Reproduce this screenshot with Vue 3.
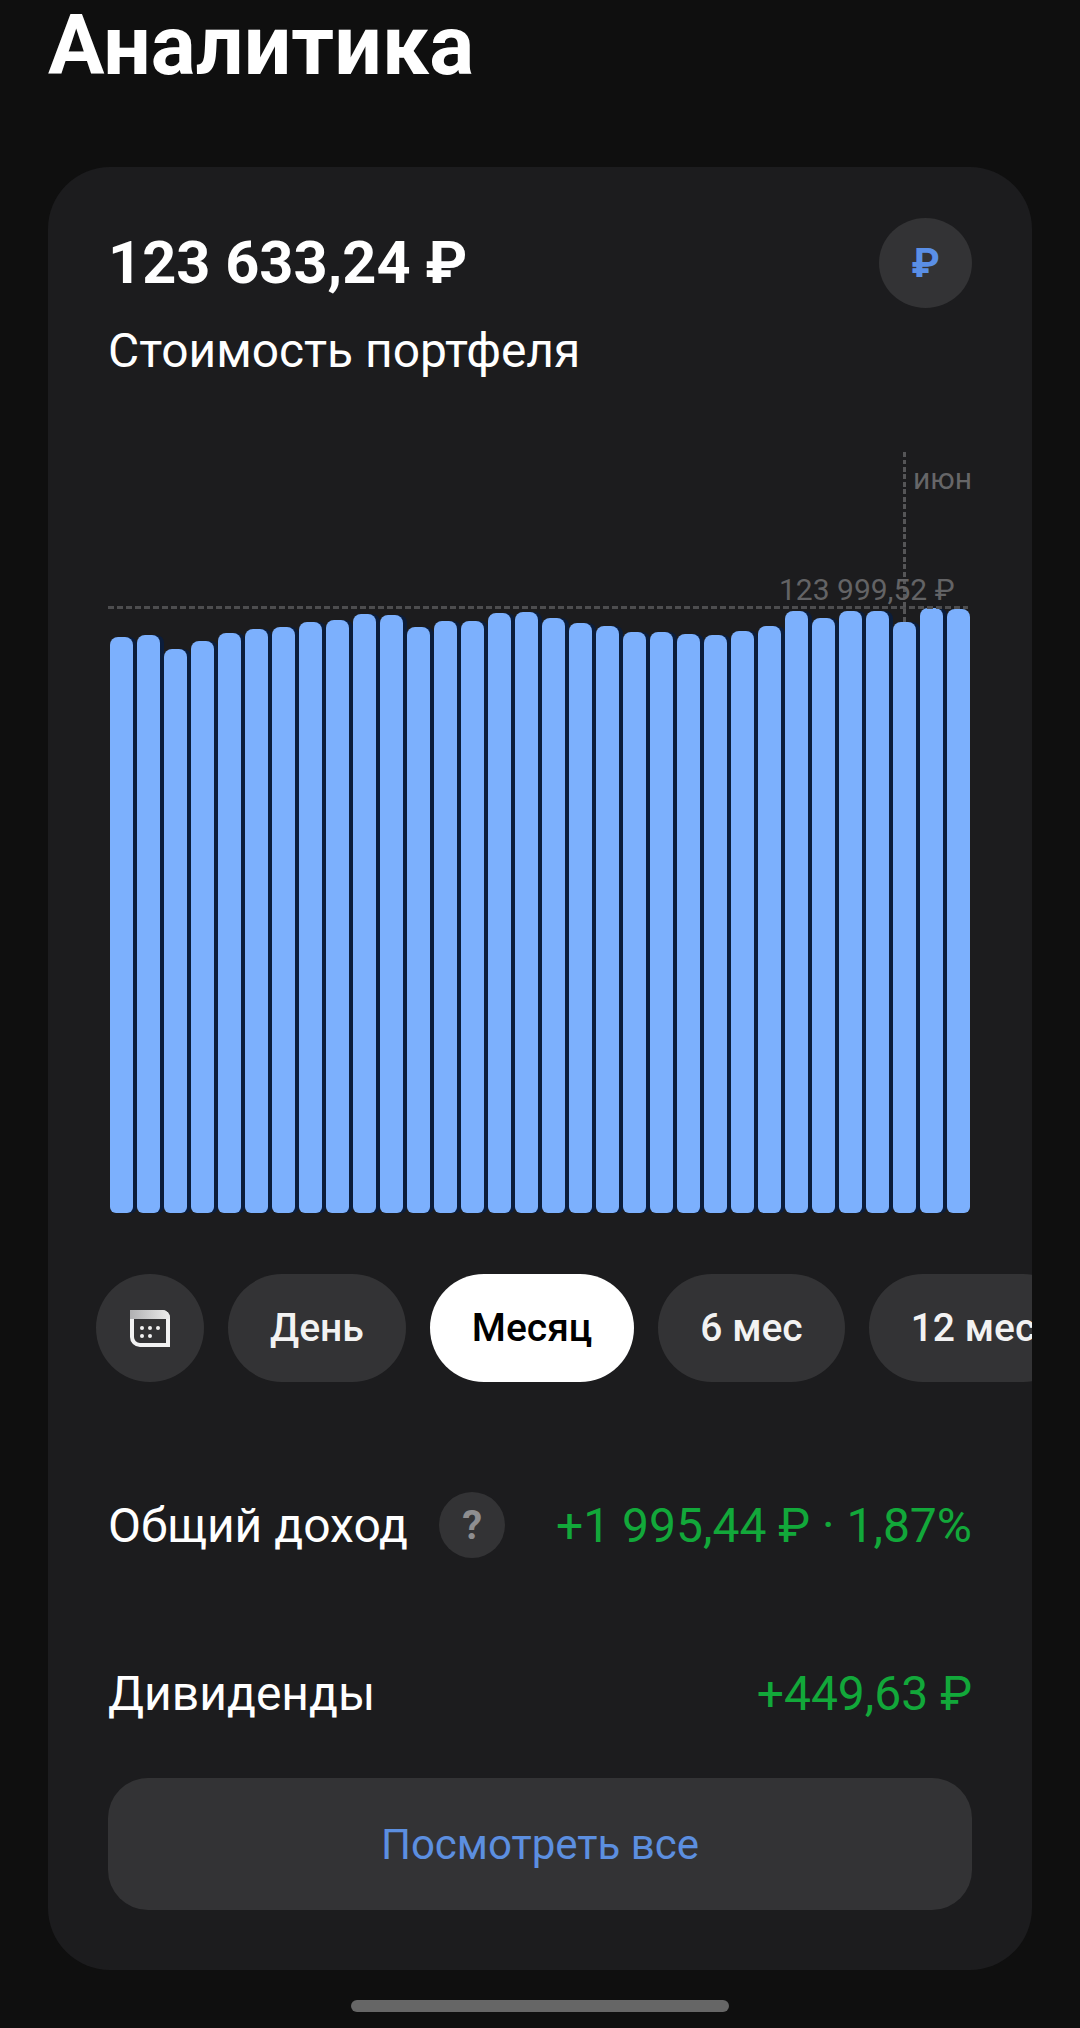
<script setup>
// Top edge of each bar in page pixels, the chart baseline is at 1213
const tops = [
  637, 635, 649, 641, 633, 629, 627, 622, 620, 614, 615, 627, 621, 621, 613, 612,
  618, 623, 626, 632, 632, 634, 635, 631, 626, 611, 618, 611, 611, 622, 608, 609,
]
const bars = tops.map((top) => 1213 - top)

const periods = [
  { label: 'День', active: false },
  { label: 'Месяц', active: true },
  { label: '6 мес', active: false },
  { label: '12 мес', active: false },
]
const calendarDots = [
  [12, 18], [20, 18], [28, 18],
  [12, 26], [20, 26],
]
</script>

<template>
  <div class="page">
    <h1 class="title">Аналитика</h1>

    <section class="card">
      <!-- Portfolio header -->
      <div class="head">
        <div>
          <div class="amount">123 633,24 ₽</div>
          <div class="subtitle">Стоимость портфеля</div>
        </div>
        <div class="currency">₽</div>
      </div>

      <!-- Chart -->
      <div class="chart">
        <div class="bars">
          <div
            v-for="(height, index) in bars"
            :key="index"
            class="bar"
            :style="{ height: height + 'px' }"
          ></div>
        </div>
        <div class="line-h"></div>
        <div class="line-v"></div>
        <span class="month">июн</span>
        <span class="max-value">123 999,52 ₽</span>
      </div>

      <!-- Period switch -->
      <div class="periods">
        <button class="pill pill-icon" type="button" aria-label="Календарь">
          <svg width="40" height="37" viewBox="0 0 40 37" fill="none">
            <defs>
              <linearGradient id="calendar-top" x1="0" y1="0" x2="1" y2="0">
                <stop offset="0" stop-color="#b0b0b2" />
                <stop offset="1" stop-color="#ececec" />
              </linearGradient>
            </defs>
            <path
              d="M2 2H32a6 6 0 0 1 6 6V35H10a8 8 0 0 1-8-8Z"
              stroke="#f2f2f2"
              stroke-width="4"
            />
            <path d="M0 0H32a8 8 0 0 1 8 8V9H0Z" fill="url(#calendar-top)" />
            <circle
              v-for="dot in calendarDots"
              :key="dot.join()"
              :cx="dot[0]"
              :cy="dot[1]"
              r="2"
              fill="#f2f2f2"
            />
          </svg>
        </button>
        <button
          v-for="period in periods"
          :key="period.label"
          class="pill"
          :class="{ active: period.active }"
          type="button"
        >
          {{ period.label }}
        </button>
      </div>

      <!-- Totals -->
      <div class="row row-income">
        <div class="row-label">
          <span>Общий доход</span>
          <span class="help">?</span>
        </div>
        <span class="profit">+1 995,44 ₽ · 1,87%</span>
      </div>
      <div class="row row-dividends">
        <span>Дивиденды</span>
        <span class="profit">+449,63 ₽</span>
      </div>

      <button class="view-all" type="button">Посмотреть все</button>
    </section>

    <div class="home-bar"></div>
  </div>
</template>

<style>
html,
body {
  margin: 0;
  background: #0f0f0f;
}
</style>

<style scoped>
.page {
  width: 1080px;
  height: 2028px;
  overflow: hidden;
  background: #0f0f0f;
  font-family: Roboto, "Noto Sans", sans-serif;
  color: #fff;
}

.title {
  margin: 0;
  padding: 0 48px;
  height: 167px;
  box-sizing: border-box;
  font-size: 84px;
  font-weight: 700;
  letter-spacing: 0.1px;
  line-height: 92px;
}

.card {
  margin: 0 48px;
  height: 1803px;
  box-sizing: border-box;
  padding-top: 51px;
  border-radius: 62px;
  background: #1c1c1e;
  overflow: hidden;
}

.head {
  display: flex;
  justify-content: space-between;
  align-items: flex-start;
  padding: 0 60px;
}

.amount {
  font-size: 59.5px;
  font-weight: 700;
  line-height: 90px;
}

.subtitle {
  margin-top: 13px;
  font-size: 47.9px;
  line-height: 60px;
}

.currency {
  display: flex;
  align-items: center;
  justify-content: center;
  width: 93px;
  height: 90px;
  border-radius: 50%;
  background: #333335;
  color: #5a8fe6;
  font-size: 40px;
  font-weight: 700;
}

.chart {
  position: relative;
  height: 761px;
  margin: 71px 60px 0;
}

.bars {
  position: absolute;
  left: 2px;
  bottom: 0;
  display: flex;
  align-items: flex-end;
  gap: 4px;
}

.bar {
  width: 23px;
  border-radius: 8px 8px 6px 6px;
  background: #7cb0fd;
  box-shadow: 4px 0 0 #0b1d3b;
}

.bar:last-child {
  box-shadow: none;
}

.line-h {
  position: absolute;
  left: 0;
  right: 4px;
  top: 154px;
  height: 3px;
  background: repeating-linear-gradient(90deg, #4d4d4f 0 6px, transparent 6px 9px);
}

.line-v {
  position: absolute;
  left: 795px;
  top: 0;
  width: 3px;
  height: 170px;
  background: repeating-linear-gradient(180deg, #555557 0 5px, transparent 5px 7.5px);
}

.month {
  position: absolute;
  top: 9px;
  left: 805px;
  color: #666668;
  font-size: 30px;
  line-height: 36px;
}

.max-value {
  position: absolute;
  top: 120px;
  left: 671px;
  color: #636365;
  font-size: 30px;
  line-height: 36px;
  white-space: nowrap;
}

.periods {
  display: flex;
  gap: 24px;
  margin-top: 61px;
  padding-left: 48px;
}

.pill {
  flex: none;
  height: 108px;
  padding: 0 42px;
  border: none;
  border-radius: 54px;
  background: #333335;
  color: #f2f2f2;
  font-family: inherit;
  font-size: 39px;
  font-weight: 500;
}

.pill-icon {
  display: flex;
  align-items: center;
  justify-content: center;
  width: 108px;
  padding: 0;
}

.pill.active {
  background: #fff;
  color: #000;
}

.row {
  display: flex;
  justify-content: space-between;
  align-items: center;
  padding: 0 60px;
  height: 66px;
  font-size: 48px;
}

.row-income {
  margin-top: 110px;
}

.row-dividends {
  margin-top: 102px;
}

.row-label {
  display: flex;
  align-items: center;
  gap: 31px;
}

.help {
  display: flex;
  align-items: center;
  justify-content: center;
  width: 66px;
  height: 66px;
  border-radius: 50%;
  background: #333335;
  color: #8e8e90;
  font-size: 40px;
  font-weight: 700;
}

.profit {
  color: #12a83a;
}

.view-all {
  display: block;
  width: 864px;
  height: 132px;
  margin: 52px 60px 0;
  border: none;
  border-radius: 40px;
  background: #333335;
  color: #5c8fe0;
  font-family: inherit;
  font-size: 42px;
}

.home-bar {
  width: 378px;
  height: 12px;
  margin: 30px auto 0;
  border-radius: 6px;
  background: #666;
}
</style>
